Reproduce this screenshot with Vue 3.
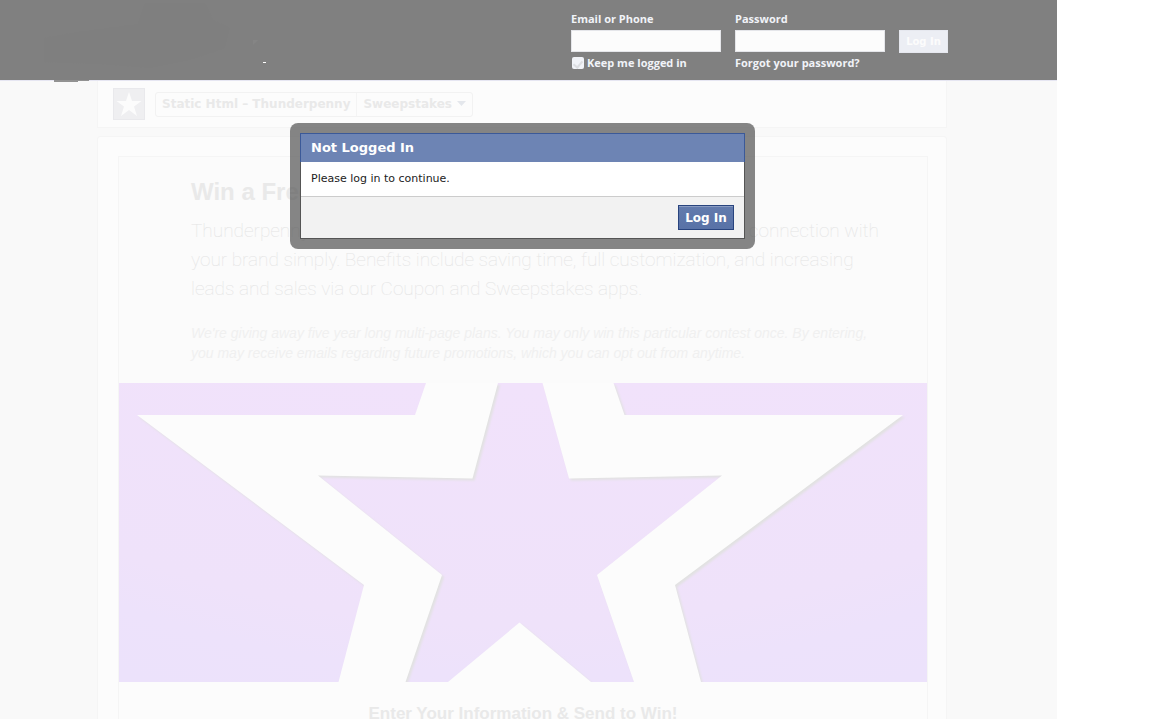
<script setup>
import { ref } from 'vue'

const email = ref('')
const password = ref('')
const keep = ref(true)
</script>

<template>
  <div class="page">
    <header class="topbar">
      <svg class="marks" width="300" height="84" viewBox="0 0 300 84" aria-hidden="true">
        <path d="M44 62V38L78 32L138 24L145 3H205L213 20L230 28L225 48L190 60L150 68L100 64Z" fill="#7f7f7f" />
        <path d="M253 40H258L253 45ZM261 45L266 40" fill="#858585" />
        <path d="M263 62h3v1h-3z" fill="#fff" />
        <path d="M54 80h35v1H78v1H54z" fill="#929292" />
      </svg>
      <form class="login" @submit.prevent>
        <div class="field">
          <label for="email">Email or Phone</label>
          <input id="email" v-model="email" class="box" type="text" />
          <label class="keep"><input v-model="keep" type="checkbox" />Keep me logged in</label>
        </div>
        <div class="field">
          <label for="password">Password</label>
          <input id="password" v-model="password" class="box" type="password" />
          <a href="#">Forgot your password?</a>
        </div>
        <button class="enter" type="submit">Log In</button>
      </form>
    </header>

    <main class="column">
      <nav class="crumbs">
        <svg class="logo" width="32" height="32" viewBox="0 0 32 32" aria-hidden="true">
          <rect x=".5" y=".5" width="31" height="31" fill="#efeff1" stroke="#e9e9ec" />
          <path d="M16 4L19 13H28.5L21 18.5L24 28L16 22L8 28L11 18.5L3.500 13H13Z" fill="#fcfcfc" />
        </svg>
        <div class="trail">
          <a href="#">Static Html – Thunderpenny</a>
          <a href="#" class="last">Sweepstakes
            <svg width="9" height="6" viewBox="0 0 9 6" aria-hidden="true"><path d="M0 0H9L4.500 5Z" fill="#e4e7ec" /></svg>
          </a>
        </div>
      </nav>

      <section class="panel">
        <article class="card">
          <div class="copy">
            <h1>Win a Free</h1>
            <p class="lead">
              <span class="line"><span>Thunderpenny</span><span>connection with</span></span>
              <span class="line">your brand simply. Benefits include saving time, full customization, and increasing</span>
              <span class="line">leads and sales via our Coupon and Sweepstakes apps.</span>
            </p>
            <p class="terms">
              We're giving away five year long multi-page plans. You may only win this particular contest once. By entering,<br />
              you may receive emails regarding future promotions, which you can opt out from anytime.
            </p>
          </div>
          <svg class="hero" viewBox="0 0 808 299" aria-hidden="true">
            <defs>
              <radialGradient id="lilac" gradientUnits="userSpaceOnUse" cx="404" cy="-904" r="1260">
                <stop offset="0.72" stop-color="#f1e2fb" />
                <stop offset="0.91" stop-color="#efe2fa" />
                <stop offset="0.95" stop-color="#ede2fb" />
                <stop offset="1" stop-color="#ece2fb" />
              </radialGradient>
              <filter id="soft"><feGaussianBlur stdDeviation="1" /></filter>
              <g id="star">
                <path d="M307 0L296 32H18L245 202L219.500 299H286.500L323 192L199 92.500L353.500 95.500L379 0Z" />
                <path d="M423.500 0L450 95.500L603 92.500L478 192L515 299H582L556 202L784 32H505.500L494.500 0Z" />
                <path d="M329 299L400.500 239.500L472 299Z" />
              </g>
            </defs>
            <rect width="808" height="299" fill="url(#lilac)" />
            <use href="#star" x="2" y="2" fill="#e2e2e2" filter="url(#soft)" />
            <use href="#star" fill="#fcfcfc" />
          </svg>
          <h2>Enter Your Information &amp; Send to Win!</h2>
        </article>
      </section>

      <div class="frame">
        <div class="dialog" role="dialog" aria-labelledby="dialog-title">
          <h3 id="dialog-title">Not Logged In</h3>
          <p>Please log in to continue.</p>
          <footer><button type="button">Log In</button></footer>
        </div>
      </div>
    </main>
  </div>
</template>

<style>
body {
  background: #fff;
}
</style>

<style scoped>
* {
  box-sizing: border-box;
}
.page {
  height: 100vh;
  margin-right: 95px;
  overflow: hidden;
  display: flex;
  flex-direction: column;
  background: #f9f9f9;
  font-family: "DejaVu Sans", sans-serif;
  font-size: 11px;
}
h1, h2, h3, p {
  margin: 0;
}
button, input {
  font: inherit;
  margin: 0;
}
a {
  color: inherit;
  text-decoration: none;
}
.topbar {
  position: relative;
  z-index: 1;
  flex: none;
  height: 81px;
  padding: 11px 109px 0 0;
  background: #808080;
  border-bottom: 1px solid #e6e6f2;
}
.marks {
  position: absolute;
  left: 0;
  top: 0;
}
.login {
  display: flex;
  justify-content: flex-end;
  gap: 14px;
  color: #f1f3f8;
  font-family: "Open Sans", "Noto Sans", sans-serif;
  font-weight: 700;
  line-height: 16px;
}
.field {
  display: flex;
  flex-direction: column;
  width: 150px;
}
.box {
  height: 22px;
  margin: 3px 0;
  padding: 2px;
  background: #fcfcfc;
  border: 1px solid #e5e6ea;
}
.keep {
  display: flex;
  align-items: center;
  gap: 3px;
}
.keep input {
  appearance: none;
  width: 12px;
  height: 12px;
  margin-left: 1px;
  border-radius: 2px;
  background: #f1f3f8;
  display: grid;
  place-items: center;
}
.keep input:checked::before {
  content: "";
  width: 4px;
  height: 7px;
  border: solid #dcdee2;
  border-width: 0 2px 2px 0;
  transform: rotate(40deg);
}
.enter {
  width: 49px;
  height: 23px;
  margin-top: 19px;
  padding: 0;
  border: 1px solid #e6e8ef;
  background: #eceef4;
  color: #fcfcfc;
  font-family: "DejaVu Sans", sans-serif;
  font-size: 10px;
  font-weight: 700;
}
.column {
  position: relative;
  flex: 1;
  margin: 0 110px 0 97px;
  display: flex;
  flex-direction: column;
  gap: 8px;
}
.crumbs {
  display: flex;
  align-items: center;
  gap: 10px;
  height: 47px;
  flex: none;
  padding: 0 15px;
  background: #fcfcfc;
  border: 1px solid #f5f5f5;
  border-top: 0;
}
.trail {
  display: flex;
  height: 25px;
  border: 1px solid #f2f2f2;
  border-radius: 3px;
  color: #e9e9e9;
  font-size: 12px;
  font-weight: 700;
  line-height: 23px;
}
.trail a {
  padding: 0 6px;
}
.trail .last {
  display: flex;
  align-items: center;
  gap: 5px;
  border-left: 1px solid #f4f4f4;
}
.panel {
  flex: 1;
  padding: 19px 18px 0 20px;
  background: #fcfcfc;
  border: 1px solid #f5f5f5;
  border-radius: 3px 3px 0 0;
}
.card {
  height: 100%;
  border: 1px solid #f5f5f5;
  border-bottom: 0;
  background: #fbfbfb;
  font-family: "Liberation Sans", Arial, sans-serif;
}
.copy {
  height: 226px;
  padding: 20px 48px 0 72px;
}
h1 {
  color: #e9e9e9;
  font-size: 24px;
  line-height: 30px;
}
.lead {
  margin-top: 9px;
  color: #e4e4e4;
  font-family: Roboto, "Liberation Sans", sans-serif;
  font-size: 19px;
  font-weight: 100;
  line-height: 29px;
}
.line {
  display: flex;
  justify-content: space-between;
  white-space: nowrap;
}
.terms {
  margin-top: 20px;
  color: #f0f0f0;
  font-size: 14px;
  font-style: italic;
  line-height: 20px;
  white-space: nowrap;
}
.hero {
  display: block;
  width: 100%;
}
h2 {
  padding-top: 20px;
  color: #e9e9e9;
  background: #fcfcfc;
  font-size: 17px;
  line-height: 24px;
  text-align: center;
}
.frame {
  position: absolute;
  top: 42px;
  left: 50%;
  width: 465px;
  margin-left: -232px;
  padding: 10px;
  border-radius: 8px;
  background: rgba(82, 82, 82, 0.7);
}
.dialog {
  border: 1px solid #555;
  background: #fff;
}
.dialog h3 {
  margin: -1px -1px 0;
  padding: 0 10px;
  border: 1px solid #3b5998;
  border-bottom: 0;
  background: #6d84b4;
  color: #fff;
  font-size: 13px;
  line-height: 28px;
}
.dialog p {
  padding: 9px 10px;
  color: #222;
  line-height: 16px;
}
.dialog footer {
  display: flex;
  justify-content: flex-end;
  padding: 8px 10px;
  border-top: 1px solid #ccc;
  background: #f2f2f2;
}
.dialog button {
  width: 56px;
  height: 25px;
  padding: 0;
  border: 1px solid #29447e;
  background: linear-gradient(#637bad, #5872a7);
  box-shadow: inset 0 1px 0 #8a9cc2;
  color: #fff;
  font-size: 12px;
  font-weight: 700;
}
</style>
